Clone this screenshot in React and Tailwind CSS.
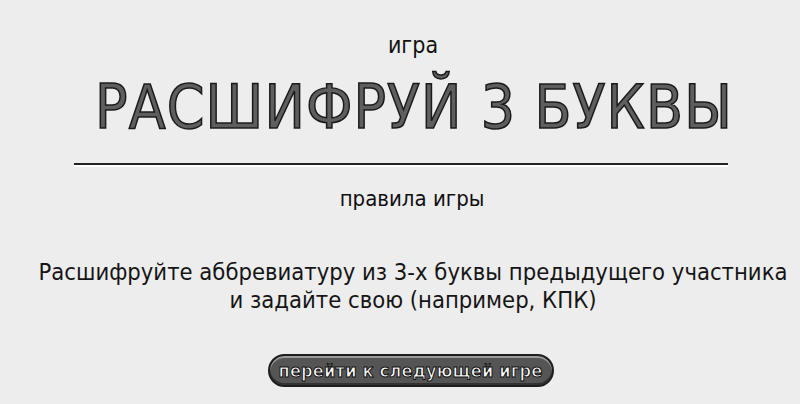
import React from 'react';

// Narrow sans for all labels on the game card
const narrow = "font-['Liberation_Sans_Narrow','DejaVu_Sans_Condensed','Liberation_Sans',sans-serif]";

export default function App() {
  return (
    <div className={`w-[800px] h-[404px] bg-[#ededed] flex flex-col items-center text-[#111] ${narrow}`}>
      <div className="mt-[31px] ml-[26px] text-[23px] leading-[28px]">игра</div>

      <h1 className="mt-[22px] ml-[28px] text-[60px] leading-[52px] tracking-[1.1px] text-[#5e5e5e] [-webkit-text-stroke:1.5px_#1a1a1a] font-normal">
        РАСШИФРУЙ 3 БУКВЫ
      </h1>

      <div className="mt-[30px] w-[654px] ml-[2px] flex flex-col">
        <div className="h-[2px] bg-[#222]" />
        <div className="h-[2px] bg-white" />
      </div>

      <div className="mt-[19px] ml-[24px] text-[22px] leading-[26px]">правила игры</div>

      <p className="mt-[46px] ml-[26px] text-[23.6px] leading-[28px] text-center text-[#151515]">
        Расшифруйте аббревиатуру из 3-х буквы предыдущего участника
        <br />
        и задайте свою (например, КПК)
      </p>

      <button className="mt-[40px] ml-[21px] w-[286px] h-[33px] rounded-full bg-[#555] border-2 border-[#1e1e1e] shadow-[inset_0_2px_0_#9a9a9a,inset_0_-2px_0_#333] flex items-center justify-center">
        <span className="text-[18px] font-bold text-white tracking-[0.2px] [-webkit-text-stroke:1px_#111]">
          перейти к следующей игре
        </span>
      </button>
    </div>
  );
}
